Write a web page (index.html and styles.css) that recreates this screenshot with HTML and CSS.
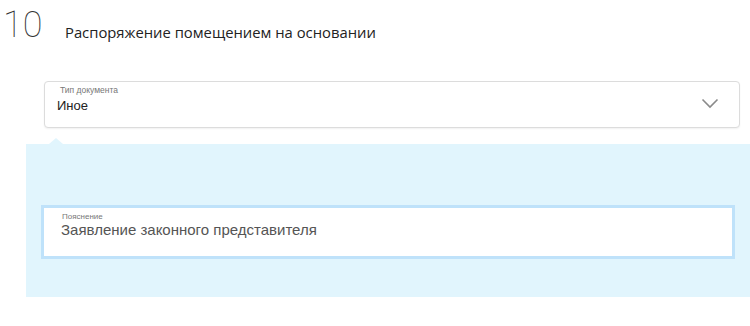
FILE: index.html
```html
<!DOCTYPE html>
<html lang="ru">
<head>
    <meta charset="UTF-8">
    <meta name="viewport" content="width=device-width, initial-scale=1.0">
    <title>Распоряжение помещением</title>
    <link rel="stylesheet" href="styles.css">
</head>
<body>
    <div class="step">
        <div class="step-header">
            <span class="step-number">10</span>
            <h2 class="step-title">Распоряжение помещением на основании</h2>
        </div>

        <div class="select-field">
            <div class="field-text">
                <label class="field-label">Тип документа</label>
                <div class="select-value">Иное</div>
            </div>
            <svg class="chevron" width="18" height="11" viewBox="0 0 18 11">
                <path d="M1.5 1.5 L9 9 L16.5 1.5" fill="none" stroke="#8a8a8a" stroke-width="1.6"/>
            </svg>
        </div>

        <div class="details-panel">
            <div class="input-field">
                <label class="field-label" for="note">Пояснение</label>
                <input type="text" id="note" class="input-value" value="Заявление законного представителя">
            </div>
        </div>
    </div>
</body>
</html>
```

FILE: styles.css
```css
body {
    margin: 0;
    padding: 0;
    background-color: #fff;
    font-family: "Open Sans", Arial, sans-serif;
    color: #222;
}
.step {
    padding-top: 10px;
}
.step-header {
    display: flex;
    align-items: flex-end;
    height: 30px;
    padding-left: 3px;
}
.step-number {
    font-family: Roboto, "Liberation Sans", sans-serif;
    font-weight: 100;
    font-size: 36px;
    line-height: 30px;
    color: #333;
    width: 62px;
}
.step-title {
    margin: 0;
    font-size: 14.8px;
    font-weight: 400;
    line-height: 20px;
    color: #222;
    padding-bottom: 0;
    margin-bottom: -2px;
}
.select-field {
    display: flex;
    align-items: center;
    justify-content: space-between;
    box-sizing: border-box;
    margin: 41px 0 0 44px;
    width: 696px;
    height: 47px;
    padding: 0 20px 0 12px;
    border: 1px solid #dcdcdc;
    border-radius: 4px;
    box-shadow: 0 1px 2px rgba(0, 0, 0, 0.06);
    background-color: #fff;
}
.field-text {
    margin-top: -10px;
}
.field-label {
    display: block;
    font-family: "Liberation Sans", Arial, sans-serif;
    font-size: 8.5px;
    line-height: 10px;
    color: #777;
    padding-left: 3px;
}
.select-value {
    font-family: "Liberation Sans", Arial, sans-serif;
    font-size: 13px;
    line-height: 18px;
    color: #222;
    margin-top: 2px;
}
.chevron {
    display: block;
    margin-top: -2px;
}
.details-panel {
    position: relative;
    margin: 16px 0 0 26px;
    padding: 61px 15px 38px 15px;
    background-color: #e1f5fd;
}
.details-panel::before {
    content: "";
    position: absolute;
    top: -6px;
    left: 23px;
    border-left: 7px solid transparent;
    border-right: 7px solid transparent;
    border-bottom: 6px solid #e1f5fd;
}
.input-field {
    box-sizing: border-box;
    height: 54px;
    border: 3px solid #bfe2fa;
    background-color: #fff;
    padding: 4px 17px 0 17px;
}
.input-field .field-label {
    padding-left: 1px;
    font-size: 8px;
}
.input-value {
    display: block;
    width: 100%;
    border: none;
    outline: none;
    padding: 0;
    margin-top: -1px;
    font-family: "Liberation Sans", Arial, sans-serif;
    font-size: 15px;
    line-height: 18px;
    color: #555;
    background: transparent;
}
```
